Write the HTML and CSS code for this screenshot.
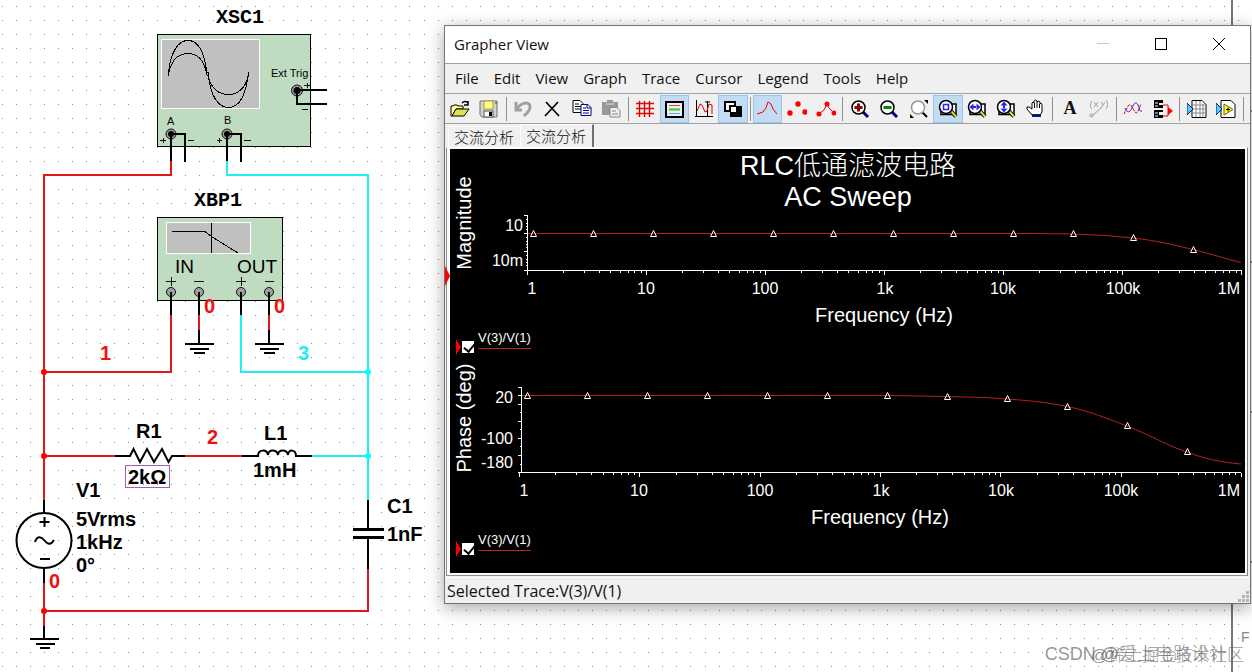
FILE: index.html
```html
<!DOCTYPE html>
<html lang="en">
<head>
<meta charset="utf-8">
<title>RLC circuit - Grapher View</title>
<link rel="stylesheet" href="styles.css">
</head>
<body>
<main class="desk">
<svg class="sheet" role="img" aria-label="RLC schematic">
  <path id="dots" class="dots"/>
  <g class="frame-line"><path d="M1232 0V672"/><path d="M1246 111H1252M1246 262H1252M1246 412H1252M1246 562H1252" /></g>
  <text class="frame-text" x="1241" y="642">F</text>

  <g class="panel">
    <rect x="157.500" y="34.500" width="153" height="112"/>
    <rect x="157.500" y="217.500" width="125" height="83"/>
  </g>
  <g class="screen">
    <rect x="161.500" y="39.500" width="98" height="69"/>
    <rect x="166.500" y="222.500" width="84" height="31"/>
  </g>
  <g class="trace">
    <path d="M168.500 76V72C171 52 178 40.500 188 40.500S204 52 206.500 70V74L208.500 77C211 96 218 107.500 228.500 107.500S246 96 248.500 72"/>
    <path d="M168.500 74C171 61 178 53.500 188 53.500S203 60 206.500 72H208V76C211 87 218 94.500 228.500 94.500S245 88 248.500 76"/>
    <path d="M171.500 231.500H205L211.500 236.500 238 253M211.500 223V253"/>
  </g>
  <g class="wire red">
    <path d="M171 161V175H44V500M171 315V372H44M199 315V330M269 315V330M44 456H115M185 456H242M44 583V626M44 611H368V569"/>
  </g>
  <g class="wire cyan">
    <path d="M227 161V175H368V500M241 315V372H368M312 456H368"/>
  </g>
  <g class="knob">
    <circle cx="297" cy="90.500" r="5.500"/><circle cx="171" cy="134" r="5"/><circle cx="227" cy="134" r="5"/>
    <circle cx="171" cy="292" r="4.500"/><circle cx="199" cy="292" r="4.500"/><circle cx="241" cy="292" r="4.500"/><circle cx="269" cy="292" r="4.500"/>
  </g>
  <g class="core"><circle cx="297" cy="90.500" r="3.500"/><circle cx="171" cy="134" r="3"/><circle cx="227" cy="134" r="3"/></g>
  <g class="wire black">
    <path d="M297 90H327M297 90V104H327M171 134V161M171 134H185V162M227 134V161M227 134H241V162"/>
    <path d="M171 292V315M199 292V315M241 292V315M269 292V315M199 330V344M269 330V344"/>
    <path d="M185 344H214M190 349H209M194 353H205M255 344H284M260 349H279M264 353H275"/>
    <path d="M44 500V513M44 568V583M44 626V639M30 639H59M36 644H55M40 648H50"/>
    <path d="M115 456H130L133.500 449 140 462 147 449 154 462 162 449 168.500 462 172 456H185"/>
    <path d="M242 456H258C258 449 267 449 268 455C268 449 277 449 278 455C278 449 287 449 288 455C288 449 296 449 296 456H312"/>
    <circle cx="44" cy="540.500" r="27.500"/>
    <path d="M39.500 522H49.500M44.500 517V527M40 559H50M35 542C37 536 41 536 44.500 540.500S51 545 54 540"/>
    <path d="M368 500V529M368 538V569"/>
  </g>
  <g class="plates"><path d="M353 529.500H384M353 537.500H384"/></g>
  <g class="marks">
    <path d="M304 85.500H310M307.500 83V88M302 109.500H308M160 140.500H166M163.500 138V143M188 140.500H194M217 140.500H222M219.500 138V143M244 140.500H251"/>
    <path d="M166 281.500H176M171.500 277V286M194 281.500H204M236 281.500H246M241.500 277V286M265 281.500H274"/>
  </g>
  <g class="red-node"><circle cx="44" cy="372" r="3"/><circle cx="44" cy="456" r="3"/><circle cx="44" cy="611" r="3"/></g>
  <g class="cyan-node"><circle cx="368" cy="372" r="3"/><circle cx="368" cy="456" r="3"/></g>
  <rect class="pick" x="125.500" y="465.500" width="44" height="22"/>

  <g class="mono"><text x="216" y="23">XSC1</text><text x="194" y="206">XBP1</text></g>
  <g class="tiny"><text x="271" y="77">Ext Trig</text><text x="167" y="125">A</text><text x="224" y="124">B</text></g>
  <g class="port"><text x="175" y="273">IN</text><text x="237" y="273">OUT</text></g>
  <g class="label">
    <text x="136" y="438">R1</text><text x="128" y="484">2kΩ</text><text x="264" y="440">L1</text><text x="253" y="477">1mH</text>
    <text x="76" y="497">V1</text><text x="76" y="526">5Vrms</text><text x="76" y="549">1kHz</text><text x="76" y="572">0°</text>
    <text x="387" y="513">C1</text><text x="387" y="541">1nF</text>
  </g>
  <g class="label net"><text x="204" y="313">0</text><text x="274" y="313">0</text><text x="100" y="360">1</text><text x="207" y="444">2</text><text x="49" y="588">0</text></g>
  <g class="label net3"><text x="298" y="360">3</text></g>
</svg>

<section class="window" aria-label="Grapher View">
  <header class="titlebar">
    <h1>Grapher View</h1>
    <button aria-label="Minimize"><svg width="12" height="12"><path d="M0 5.500H12" stroke="#c8c8c8"/></svg></button>
    <button aria-label="Maximize"><svg width="12" height="12"><rect x=".500" y=".500" width="11" height="11" fill="none" stroke="#000"/></svg></button>
    <button aria-label="Close"><svg width="12" height="12"><path d="M0 0L12 12M12 0L0 12" stroke="#000" fill="none"/></svg></button>
  </header>
  <nav class="menu">
    <button>File</button><button>Edit</button><button>View</button><button>Graph</button><button>Trace</button><button>Cursor</button><button>Legend</button><button>Tools</button><button>Help</button>
  </nav>
  <div class="toolbar">
    <button aria-label="Open"><svg class="icon" viewBox="0 0 20 20"><path d="M1 17V7H3L4 6H7L8 7H13V10H6L2 17Z" fill="#ffff9c" stroke="#000"/><path d="M2 17L6 10H19L14 17Z" fill="#e0e050" stroke="#000"/><path d="M12 4Q15 1 18 4M18 2V6H14" fill="none" stroke="#000" stroke-width="1.500"/></svg></button>
    <button aria-label="Save"><svg class="icon" viewBox="0 0 20 20"><path d="M1 2H18V18H3L1 16Z" fill="#d4d4d4" stroke="#707070"/><rect x="5" y="2" width="9" height="8" fill="#ffff80" stroke="#a0a040"/><rect x="5" y="12" width="9" height="6" fill="#fff" stroke="#505050"/><path d="M10 13H13V17H10Z" fill="#000"/><path d="M16 4H18" stroke="#e00"/></svg></button>
    <i class="sep"></i>
    <button aria-label="Undo"><svg class="icon" viewBox="0 0 20 20"><path d="M3 3V11H9" fill="none" stroke="#a0a0a0" stroke-width="3"/><path d="M4 10C8 3 17 2 17 8C17 12 14 14 11 17" fill="none" stroke="#a0a0a0" stroke-width="3"/></svg></button>
    <button aria-label="Delete"><svg class="icon" viewBox="0 0 20 20"><path d="M4 3L17 17M16 3L3 17" fill="none" stroke="#000" stroke-width="1.700"/></svg></button>
    <button aria-label="Copy"><svg class="icon" viewBox="0 0 20 20"><path d="M1 1.500H8L11 4.500V13.500H1Z" fill="#fff" stroke="#000"/><path d="M3 5H7M3 7.500H9M3 10H9" stroke="#000"/><path d="M9 5.500H16L19 8.500V16.500H9Z" fill="#fff" stroke="#000080"/><path d="M15 6V9H19M11 9H14M11 11.500H17M11 14H17" fill="none" stroke="#000080"/></svg></button>
    <button aria-label="Paste"><svg class="icon" viewBox="0 0 20 20"><path d="M1 3H6V1H12V3H17V16H1Z" fill="#989898"/><path d="M5 5H13" stroke="#ddd"/><path d="M9 8.500H16L19 11.500V18H9Z" fill="#eee" stroke="#888"/><path d="M11 12H15M11 15H17" stroke="#888"/></svg></button>
    <i class="sep"></i>
    <button aria-label="Grid"><svg class="icon" viewBox="0 0 20 20"><path d="M1 4.500H19M1 9.500H19M1 14.500H19" stroke="#f00" stroke-width="1.400"/><path d="M4.500 2V18M9.500 2V18M14.500 2V18" stroke="#c00" stroke-width="1.400"/></svg></button>
    <button class="on" aria-label="Legend"><svg class="icon" viewBox="0 0 20 20"><rect x="2" y="3" width="17" height="15" fill="#eee" stroke="#000" stroke-width="2"/><path d="M5 6.500H16" stroke="#f33"/><path d="M5 10.500H16" stroke="#3c3" stroke-width="2"/><path d="M5 14.500H16" stroke="#5af"/></svg></button>
    <button aria-label="Cursors"><svg class="icon" viewBox="0 0 20 20"><path d="M2.500 1V18M1 17.500H19M13.500 2V18M11 3H16" stroke="#000"/><path d="M3 12L6 5 8 6 11 13 13 12 15 5 18 6V15" fill="none" stroke="#d00"/></svg></button>
    <button class="on" aria-label="Black background"><svg class="icon" viewBox="0 0 20 20"><rect x="7" y="7" width="12" height="11" fill="#000"/><rect x="2" y="3" width="10" height="9" fill="#fff" stroke="#000" stroke-width="2"/><path d="M7 12V7H13" fill="none" stroke="#000" stroke-width="2"/><rect x="8" y="8" width="5" height="5" fill="#fff"/></svg></button>
    <i class="sep"></i>
    <button class="on" aria-label="Line"><svg class="icon" viewBox="0 0 20 20"><path d="M0 15L6 13 9 9 11 3 14 5 16 10 20 15" fill="none" stroke="#e00"/></svg></button>
    <button aria-label="Symbols"><svg class="icon" viewBox="0 0 20 20"><g fill="#f00"><circle cx="3" cy="14" r="2.700"/><circle cx="11" cy="5" r="2.700"/><circle cx="18" cy="13" r="2.700"/></g></svg></button>
    <button aria-label="Line and symbols"><svg class="icon" viewBox="0 0 20 20"><path d="M3 15L8 11 11 5 13 9 18 14" fill="none" stroke="#e00"/><g fill="#f00"><circle cx="3" cy="15" r="2.500"/><circle cx="11" cy="5" r="2.500"/><circle cx="18" cy="14" r="2.500"/></g></svg></button>
    <i class="sep"></i>
    <button aria-label="Zoom in"><svg class="icon" viewBox="0 0 20 20"><path d="M13 13L18 18" stroke="#000080" stroke-width="3"/><circle cx="8.500" cy="8.500" r="6.500" fill="#fff" stroke="#000" stroke-width="1.500"/><path d="M4.500 8.500H12.500M8.500 4.500V12.500" stroke="#900" stroke-width="3"/></svg></button>
    <button aria-label="Zoom out"><svg class="icon" viewBox="0 0 20 20"><path d="M13 13L18 18" stroke="#000080" stroke-width="3"/><circle cx="8.500" cy="8.500" r="6.500" fill="#fff" stroke="#000" stroke-width="1.500"/><path d="M4.500 8.500H12.500" stroke="#080" stroke-width="3"/></svg></button>
    <button aria-label="Zoom full"><svg class="icon" viewBox="0 0 20 20"><path d="M13 13L18 18" stroke="#000" stroke-width="2"/><circle cx="9" cy="8.500" r="6.500" fill="#fff" stroke="#999" stroke-width="1.500"/><path d="M15 1H19V5ZM1 15V19H5Z" fill="#000"/></svg></button>
    <button class="on" aria-label="Zoom area"><svg class="icon" viewBox="0 0 20 20"><path d="M3 10V15.500H18V5H13" fill="#fff" stroke="#000" stroke-width="1.500"/><path d="M12 11L18 17.500" stroke="#000" stroke-width="4"/><path d="M12 11L18 17.500" stroke="#dd4" stroke-width="2"/><circle cx="8" cy="8" r="6.500" fill="#fff" stroke="#000" stroke-width="1.500"/><rect x="5.500" y="5.500" width="5" height="5" fill="none" stroke="#22f" stroke-width="1.500"/></svg></button>
    <button aria-label="Zoom horizontal"><svg class="icon" viewBox="0 0 20 20"><path d="M3 10V15.500H18V5H13" fill="#fff" stroke="#000" stroke-width="1.500"/><path d="M12 11L18 17.500" stroke="#000" stroke-width="4"/><path d="M12 11L18 17.500" stroke="#dd4" stroke-width="2"/><circle cx="8" cy="8" r="6.500" fill="#fff" stroke="#000" stroke-width="1.500"/><path d="M2.500 8L6.500 4.500V11.500ZM13.500 8L9.500 4.500V11.500ZM6 7H10V9H6Z" fill="#22f"/></svg></button>
    <button aria-label="Zoom vertical"><svg class="icon" viewBox="0 0 20 20"><path d="M3 10V15.500H18V5H13" fill="#fff" stroke="#000" stroke-width="1.500"/><path d="M12 11L18 17.500" stroke="#000" stroke-width="4"/><path d="M12 11L18 17.500" stroke="#dd4" stroke-width="2"/><circle cx="8" cy="8" r="6.500" fill="#fff" stroke="#000" stroke-width="1.500"/><path d="M8 2.500L11.500 6.500H4.500ZM8 13.500L11.500 9.500H4.500ZM7 6H9V10H7Z" fill="#22f"/></svg></button>
    <button aria-label="Pan"><svg class="icon" viewBox="0 0 20 20"><path d="M6 16L1 10V8H3L6 10V4L7 3 8 4V2L9.500 1 11 2V3L12 2 14 3V5L15 4 16 6V13L14 16Z" fill="#fff" stroke="#000"/><path d="M8.500 4V9M11 3V9M13.500 5V9" stroke="#000"/><path d="M6 15H15V18H6Z" fill="#002080"/></svg></button>
    <i class="sep"></i>
    <button class="letter" aria-label="Add text">A</button>
    <button aria-label="Add data label"><svg class="icon" viewBox="0 0 20 20"><path d="M3 2C1 4 1 8 3 10M17 1C19 3 19 8 17 10M5 3L9 8M9 3L5 8M12 3L14 6M16 3L12 9" fill="none" stroke="#a0a0a0"/><path d="M12 9L3 17" stroke="#999"/><circle cx="2.500" cy="16.500" r="1.500" fill="#ddd" stroke="#999"/></svg></button>
    <i class="sep"></i>
    <button aria-label="Overlay traces"><svg class="icon" viewBox="0 0 20 20"><path d="M1 15L5 7Q7 4 9 8L12 13Q14 15 15 12L18 5" fill="none" stroke="#e00" stroke-dasharray="3 1"/><path d="M2 9C4 14 7 14 9 9S13 2 15 6 16 13 19 12" fill="none" stroke="#22d"/></svg></button>
    <button aria-label="Export signals"><svg class="icon" viewBox="0 0 20 20"><path d="M1 1H10V4H6V6H10V9H1ZM1 11H10V13H6V16H10V19H1Z" fill="#000"/><path d="M2 4H5M2 7H5M2 14H5M2 17H5" stroke="#fff"/><path d="M10 6H15V17H10M15 12H18" fill="none" stroke="#e00"/><path d="M15 8L20 12 15 16Z" fill="#f00"/></svg></button>
    <i class="sep"></i>
    <button aria-label="Export to Excel"><svg class="icon" viewBox="0 0 20 20"><path d="M5 1.500H15L19 5.500V18.500H5Z" fill="#fff" stroke="#000"/><path d="M5 6H19M5 10H19M5 14H19M9 2V18M13 2V18M16 5V18" stroke="#888"/><path d="M0 4L6 10 0 16Z" fill="#5cf" stroke="#026"/></svg></button>
    <button aria-label="Export to LabVIEW"><svg class="icon" viewBox="0 0 20 20"><path d="M5 1.500H15L19 5.500V18.500H5Z" fill="#fff" stroke="#000"/><path d="M8 5L17 10.500 8 16Z" fill="#ff3" stroke="#660"/><path d="M10 10.500H14M12 8.500V12.500" stroke="#000"/><path d="M0 4L6 10 0 16Z" fill="#5cf" stroke="#026"/></svg></button>
    <i class="sep"></i>
  </div>
  <div class="tabs"><button>交流分析</button><button class="current">交流分析</button></div>
  <div class="plot-frame">
    <span class="page-mark"></span>
    <div class="plot">
      <svg class="chart" viewBox="450 149 795 182">
        <g class="heading"><text x="848" y="175">RLC低通滤波电路</text><text x="848" y="206">AC Sweep</text></g>
        <text class="axis-title" transform="translate(471 223) rotate(-90)">Magnitude</text>
        <path class="curve" d="M527 233.500H1035L1073 234 1105 235.500 1133 238C1160 241 1178 246 1193 249.500 1210 253.500 1224 258.500 1241 262.500"/>
        <path class="axis" data-x0="527.5" data-step="119" data-y="270.5" d="M527.500 215.500V270.500M524 215.500H528M524 233.500H528M524 251.500H528M524 270.500H528M526 219.500H528M526 223.500H528M526 226.500H528M526 229.500H528M526 237.500H528M526 241.500H528M526 244.500H528M526 247.500H528M526 255.500H528M526 259.500H528M526 262.500H528M526 265.500H528"/>
        <path class="markers" data-x="533.5" data-ys="234 234 234 234 234 234 234 234 234 234 238 250"/>
        <g class="tick right"><text x="523" y="231">10</text><text x="523" y="266">10m</text><text x="1240" y="294">1M</text></g>
        <g class="tick"><text x="532" y="294">1</text><text x="646" y="294">10</text><text x="765" y="294">100</text><text x="885" y="294">1k</text><text x="1003" y="294">10k</text><text x="1123" y="294">100k</text></g>
        <text class="axis-title" x="884" y="322">Frequency (Hz)</text>
      </svg>
      <label class="legend"><span class="flag"></span><input type="checkbox" checked><span class="name">V(3)/V(1)</span></label>
      <svg class="chart" viewBox="450 357 795 176">
        <text class="axis-title" transform="translate(471 418) rotate(-90)">Phase (deg)</text>
        <path class="curve" d="M522 395.500H890L947 396.500 985 397.500 1007 399C1035 401 1050 403 1067 406.500 1090 411 1108 419 1127 426 1150 435 1168 446 1187 452 1205 459 1220 462 1241 464"/>
        <path class="axis" data-x0="519.5" data-step="120.33" data-y="472.5" d="M521.500 387.500V472.500M518 387.500H522M518 395.500H522M518 404.500H522M520 412.500H522M518 421.500H522M520 429.500H522M518 438.500H522M520 446.500H522M518 455.500H522M520 464.500H522M518 472.500H522"/>
        <path class="markers" data-x="527.5" data-ys="396 396 396 396 396 396 396 397 399 407 426 452"/>
        <g class="tick right"><text x="513" y="403">20</text><text x="513" y="444">-100</text><text x="513" y="468">-180</text><text x="1240" y="496">1M</text></g>
        <g class="tick"><text x="524" y="496">1</text><text x="639" y="496">10</text><text x="760" y="496">100</text><text x="881" y="496">1k</text><text x="1001" y="496">10k</text><text x="1121" y="496">100k</text></g>
        <text class="axis-title" x="880" y="524">Frequency (Hz)</text>
      </svg>
      <label class="legend last"><span class="flag"></span><input type="checkbox" checked><span class="name">V(3)/V(1)</span></label>
    </div>
  </div>
  <footer class="status"><span>Selected Trace:V(3)/V(1)</span>
    <svg class="grip" width="12" height="12" fill="#b4b4b4"><path d="M8 0h3v3h-3zM4 4h3v3h-3zM8 4h3v3h-3zM0 8h3v3h-3zM4 8h3v3h-3zM8 8h3v3h-3z"/></svg>
  </footer>
</section>
<p class="mark mark-a">CSDN @爱上电路设计</p>
<p class="mark mark-b">@稀土掘金技术社区</p>
</main>
<script src="script.js"></script>
</body>
</html>
```
FILE: styles.css
```css
* { box-sizing: border-box; }
body { margin: 0; background: #fff; color: #111; font-family: "Open Sans", "Noto Sans CJK SC", sans-serif; font-size: 15px; }
button { border: 0; padding: 0; background: none; font: inherit; color: inherit; }
.desk { position: relative; min-height: 100vh; overflow: hidden; }
.sheet { position: absolute; inset: 0; width: 100%; height: 100%; font-family: "Liberation Sans", Arial, sans-serif; }

.dots { stroke: #888; fill: none; shape-rendering: crispEdges; }
.frame-line { stroke: #777; stroke-width: 2; fill: none; }
.frame-text { font-size: 14px; fill: #888; }
.panel rect { fill: #c0dcc0; stroke: #000; }
.screen rect { fill: #c0c0c0; stroke: #fff; }
.trace { fill: none; stroke: #000; shape-rendering: crispEdges; }
.wire { fill: none; stroke-width: 2; }
.red { stroke: #e01818; }
.cyan { stroke: #20eef4; }
.black { stroke: #000; }
.knob circle { fill: #a0a0a0; stroke: #111; }
.plates { stroke: #000; stroke-width: 3; }
.marks { stroke: #111; }
.red-node { fill: #f00; }
.cyan-node { fill: #0ff; }
.pick { fill: none; stroke: #a060b0; }
.mono { font: bold 20px "Liberation Mono", monospace; }
.tiny { font-size: 11px; }
.port { font-size: 19px; }
.label { font-size: 20px; font-weight: bold; }
.net { fill: #f01010; }
.net3 { fill: #20eef4; }

.window { position: absolute; top: 25px; left: 444px; right: 1px; border: 1px solid #747474; background: #f0f0f0; box-shadow: 0 4px 16px rgba(0, 0, 0, .35); }
.titlebar { display: flex; align-items: center; height: 38px; padding: 0 2px 2px 9px; background: #fff; border-bottom: 1px solid #a0a0a0; }
.titlebar h1 { flex: 1; margin: 0; font-size: 15px; font-weight: normal; }
.titlebar button { display: flex; align-items: center; justify-content: center; width: 58px; height: 34px; }
.menu { display: flex; align-items: center; gap: 15px; height: 30px; padding: 0 0 2px 10px; border-bottom: 1px solid #a0a0a0; }
.toolbar { display: flex; align-items: center; height: 30px; padding-right: 4px; border-bottom: 1px solid #a0a0a0; }
.toolbar button { display: flex; flex: 1; align-items: center; justify-content: center; height: 28px; border: 1px solid transparent; }
.toolbar .on { background: #c2dcf4; border-color: #98c4ec; }
.toolbar .letter { font: bold 18px "Liberation Serif", serif; }
.icon { width: 20px; height: 20px; }
.sep { width: 5px; height: 24px; border-right: 2px solid transparent; border-left: 2px solid transparent; background: #909090; background-clip: padding-box; }
.tabs { display: flex; align-items: flex-end; height: 23px; padding-left: 3px; }
.tabs button { height: 21px; padding: 0 6px 0 5px; border-top: 1px solid #fff; border-left: 1px solid #fff; font-family: "Noto Sans CJK SC", sans-serif; font-size: 15px; font-weight: 300; line-height: 18px; }
.tabs .current { height: 23px; border-right: 2px solid #707070; }

.plot-frame { position: relative; margin: 0 2px 1px 1px; padding: 1px 2px 2px 3px; border: 1px solid #909090; border-top-color: #fff; border-right-color: #808080; background: #fafafa; }
.page-mark { position: absolute; left: -2px; top: 118px; border-left: 5px solid #f00; border-top: 10px solid transparent; border-bottom: 10px solid transparent; }
.plot { background: #000; color: #fff; font-family: "Liberation Sans", "Noto Sans CJK SC", sans-serif; }
.chart { display: block; width: 100%; fill: #fff; }
.heading { font-size: 27px; font-weight: 300; text-anchor: middle; }
.axis-title { font-size: 20px; text-anchor: middle; }
.tick { font-size: 16px; text-anchor: middle; }
.right { text-anchor: end; }
.curve { fill: none; stroke: #b82020; }
.axis { fill: none; stroke: #fff; shape-rendering: crispEdges; }
.markers { fill: none; stroke: #fff; }
.legend { display: flex; align-items: flex-start; height: 26px; padding-left: 6px; }
.last { height: 40px; }
.flag { margin-top: 8px; border-left: 5px solid #f00; border-top: 8px solid transparent; border-bottom: 8px solid transparent; }
.legend input { appearance: none; width: 12px; height: 12px; margin: 10px 4px 0 1px; background: #fff; }
.legend input:checked::before { content: ""; display: block; width: 5px; height: 9px; margin-left: 4px; border: solid #000; border-width: 0 2px 2px 0; transform: rotate(40deg); }
.name { height: 18px; border-bottom: 1px solid #c02020; font-size: 13px; line-height: 14px; }
.status { display: flex; align-items: center; height: 26px; padding-left: 2px; border-top: 1px solid #fff; font-size: 16px; }
.status span { flex: 1; }
.grip { align-self: flex-end; }

.mark { position: absolute; margin: 0; color: rgba(90, 90, 90, .65); font-family: "Liberation Sans", "Noto Sans CJK SC", sans-serif; font-weight: 300; line-height: 24px; white-space: nowrap; }
.mark-a { right: 25px; bottom: 6px; font-size: 18px; }
.mark-b { right: 8px; bottom: 4px; font-size: 17px; }
```
FILE: script.js
```js
// Sheet grid: one dot every 14.05 units, snapped to whole pixels
const dots = document.getElementById('dots');
let grid = '';
for (let j = 0; j * 14.05 < innerHeight; j++) {
  for (let i = 0; i * 14.05 < innerWidth; i++) {
    grid += `M${Math.round(2 + i * 14.05)} ${Math.round(6 + j * 14.05) + 0.5}h1`;
  }
}
dots.setAttribute('d', grid);

// Logarithmic frequency axes, six decades each
document.querySelectorAll('.axis').forEach((axis) => {
  const x0 = Number(axis.dataset.x0);
  const step = Number(axis.dataset.step);
  const y = Number(axis.dataset.y);
  let d = `M${x0} ${y}H${x0 + step * 6}`;
  for (let k = 0; k <= 6; k++) {
    for (let m = 1; m < (k < 6 ? 10 : 2); m++) {
      const x = Math.floor(x0 + step * (k + Math.log10(m))) + 0.5;
      d += `M${x} ${y}v${m === 1 ? 4 : 2}`;
    }
  }
  axis.setAttribute('d', axis.getAttribute('d') + d);
});

// Triangle markers, every 60 units along a trace
document.querySelectorAll('.markers').forEach((p) => {
  const x = Number(p.dataset.x);
  p.setAttribute('d', p.dataset.ys.split(' ').map((y, i) =>
    `M${x + i * 60} ${y - 3.5}l3 6h-6z`).join(''));
});
```
